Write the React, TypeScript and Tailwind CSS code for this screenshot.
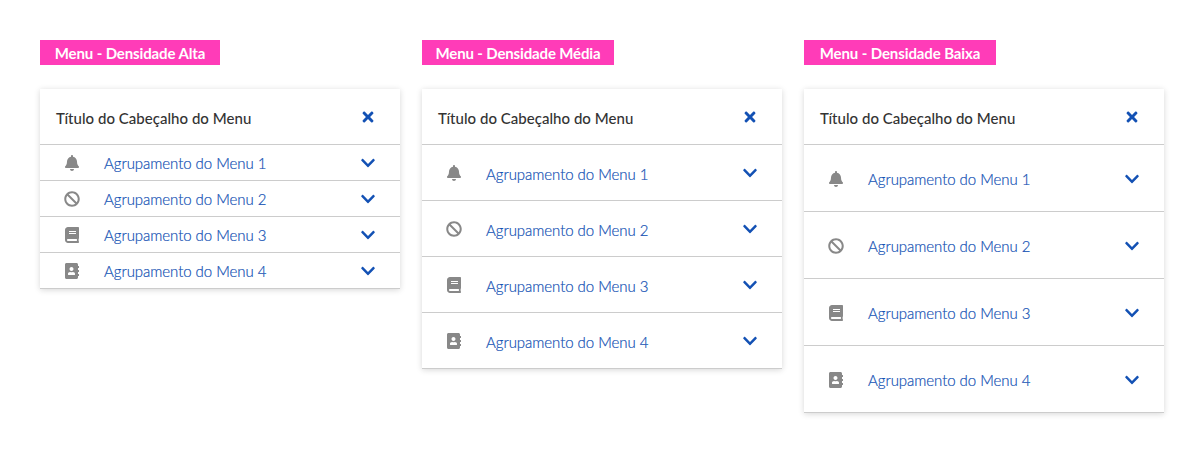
import { FaAddressBook, FaBan, FaBell, FaBook, FaChevronDown, FaTimes } from "react-icons/fa";

const icons = [FaBell, FaBan, FaBook, FaAddressBook];

type MenuProps = { label: string; tag: string; row: string; text: string };

const menus: MenuProps[] = [
  { label: "Menu - Densidade Alta", tag: "w-[180px] tracking-[-0.12px]", row: "h-9", text: "pt-0.5" },
  { label: "Menu - Densidade Média", tag: "w-48 tracking-[-0.14px]", row: "h-14", text: "pt-1" },
  { label: "Menu - Densidade Baixa", tag: "w-48 tracking-[-0.11px]", row: "h-[67px] pt-px", text: "pt-0.5" },
];

function Menu({ label, tag, row, text }: MenuProps) {
  return (
    <section className="w-[360px]">
      <h2 className={`flex h-[25px] items-center justify-center whitespace-nowrap bg-[#ff3cb8] pt-0.5 text-[15px] font-bold text-white ${tag}`}>
        {label}
      </h2>
      <nav className="mt-6 bg-white shadow-[0_1px_6px_rgba(0,0,0,0.16)]">
        <header className="flex h-14 items-center justify-between border-b border-[#ccc] pl-4 pr-[26px]">
          <span className="whitespace-nowrap pt-1 text-[15px] font-medium tracking-[0.03px] text-[#333]">
            Título do Cabeçalho do Menu
          </span>
          <button aria-label="Fechar" className="text-[#1351b4]">
            <FaTimes className="h-4 w-3" />
          </button>
        </header>
        <ul>
          {icons.map((Icon, i) => (
            <li key={i} className={`flex items-center border-b border-[#ccc] px-6 ${row}`}>
              <Icon className="size-4 shrink-0 text-[#888]" />
              <span className={`ml-6 grow whitespace-nowrap text-[15px] font-light tracking-[-0.05px] text-[#1351b4] [-webkit-text-stroke:0.2px_#1351b4] ${text}`}>
                Agrupamento do Menu {i + 1}
              </span>
              <FaChevronDown className="size-4 shrink-0 text-[#1351b4]" />
            </li>
          ))}
        </ul>
      </nav>
    </section>
  );
}

export default function App() {
  return (
    <main className="flex h-[453px] items-start gap-[22px] bg-white px-10 pt-10 font-['Lato',sans-serif]">
      {menus.map((menu) => (
        <Menu key={menu.label} {...menu} />
      ))}
    </main>
  );
}
